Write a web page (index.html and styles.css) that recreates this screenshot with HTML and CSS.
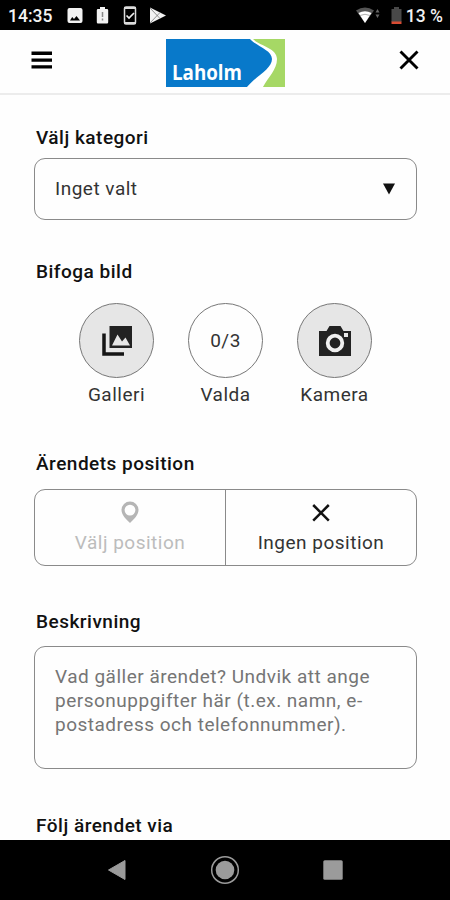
FILE: index.html
```html
<!DOCTYPE html>
<html lang="sv">
<head>
<meta charset="utf-8">
<title>Laholm</title>
<link rel="stylesheet" href="styles.css">
</head>
<body>
<div class="statusbar">
  <span class="time">14:35</span>
  <svg class="status-icons" width="102" height="30" viewBox="0 0 102 30">
    <path fill="#f2f2f2" fill-rule="evenodd" d="M3.500 8h11a2 2 0 0 1 2 2v11a2 2 0 0 1-2 2h-11a2 2 0 0 1-2-2V10a2 2 0 0 1 2-2zM4 20.500h10l-3.500-4.500-2.500 3-1.800-2z"/>
    <path fill="#f2f2f2" d="M34 7h5v2h2q1.200 0 1.200 1.200v12q0 1.300-1.200 1.300h-9q-1.200 0-1.200-1.300v-12Q30.800 9 32 9h2z"/>
    <path stroke="#888" stroke-width="1.500" d="M36.500 12v5m0 1.500v2"/>
    <rect x="58.500" y="7" width="11" height="17" rx="1.500" fill="none" stroke="#ddd" stroke-width="1.500"/>
    <path d="M58 8h12M58 23h12" stroke="#ddd" stroke-width="2"/>
    <path d="M60.500 15.500l2.500 2.500 5-5" fill="none" stroke="#eee" stroke-width="1.700"/>
    <path fill="#f2f2f2" d="M84 7.500L100 15.500 84 23.500z"/>
    <path stroke="#777" stroke-width=".8" fill="none" d="M84 8l10 10.500M84 23l10-10.500"/>
  </svg>
  <div class="status-right">
    <svg width="46" height="30" viewBox="0 0 46 30">
      <path fill="#555" d="M0 10.500Q9 4.500 18 10.500L9 23z"/>
      <path fill="#fff" d="M2.500 13Q9 9.500 15.500 13L9 23z"/>
      <path stroke="#999" stroke-width=".8" fill="none" d="M4 15.500Q9 13 14 15.500"/>
      <path fill="#666" d="M19.500 12.500l2-3.500 2 3.500zM19.500 14.500l2 3.500 2-3.500z"/>
      <path fill="#484848" d="M38 7h5v2h2.500v13h-10V9H38z"/>
      <path fill="#d94b32" d="M35.500 21.500h10V24h-10z"/>
    </svg>
    <span class="percent">13 %</span>
  </div>
</div>
<header class="header">
  <svg width="22" height="20" viewBox="0 0 22 20"><path stroke="#000" stroke-width="3.400" d="M.5 3.300h20.500M.5 10.100h20.500M.5 16.900h20.500"/></svg>
  <svg class="logo" width="119" height="48" viewBox="0 0 119 48">
    <path fill="#a6d865" d="M0 0h119v48H0z"/>
    <path fill="#fff" d="M0 0h87c7 7 24 9 24 20 0 11-9 18-14 28H0z"/>
    <path fill="#0879ca" d="M0 0h84c6 7 22 11 22 20 0 10-16 17-25 28H0z"/>
    <text class="logo-text" x="6" y="40.500" textLength="70" lengthAdjust="spacingAndGlyphs">Laholm</text>
  </svg>
  <svg width="20" height="20" viewBox="0 0 20 20"><path stroke="#000" stroke-width="2.900" d="M1.500 1.500l17 17M18.500 1.500l-17 17"/></svg>
</header>
<main class="form">
  <h2>Välj kategori</h2>
  <div class="select"><span>Inget valt</span>
    <svg width="14" height="12" viewBox="0 0 14 12"><path d="M1 .5h12L7 11.500z" fill="#111"/></svg>
  </div>
  <h2 class="title-images">Bifoga bild</h2>
  <div class="images">
    <div class="image-item">
      <div class="circle filled"><svg width="32" height="32" viewBox="0 0 32 32">
        <path fill="none" stroke="#151515" stroke-width="3.500" d="M3 8.500v20.500H23"/>
        <path fill="#222" fill-rule="evenodd" d="M8.500 1H31v22H8.500zM11 20.500h18l-4.500-8-3.500 4-4.500-7z"/>
      </svg></div><span>Galleri</span>
    </div>
    <div class="image-item">
      <div class="circle">0/3</div><span>Valda</span>
    </div>
    <div class="image-item">
      <div class="circle filled"><svg width="32" height="32" viewBox="0 0 32 32">
        <path fill="#222" d="M0 6h7.500l3-5h11l3 5H32v25H0z"/>
        <circle cx="16" cy="18" r="7.300" fill="none" stroke="#efefef" stroke-width="3.800"/>
        <rect x="25" y="8" width="4" height="4" fill="#e8e8e8"/>
      </svg></div><span>Kamera</span>
    </div>
  </div>
  <h2 class="title-position">Ärendets position</h2>
  <div class="segments">
    <div class="segment disabled">
      <svg width="18" height="23" viewBox="0 0 18 23"><path fill="#b5b5b5" fill-rule="evenodd" d="M9 .5a8.500 8.500 0 0 1 8.500 8.500C17.500 14 13 18 9 22 5 18 .5 14 .5 9A8.500 8.500 0 0 1 9 .5zM9 3.700a5.400 5.400 0 1 0 0 10.800A5.400 5.400 0 1 0 9 3.700z"/></svg>
      <span>Välj position</span>
    </div>
    <div class="segment">
      <svg width="18" height="23" viewBox="0 0 18 23"><path stroke="#111" stroke-width="2.500" d="M1.200 4l15.600 15.600M16.800 4L1.200 19.600"/></svg>
      <span>Ingen position</span>
    </div>
  </div>
  <h2 class="title-description">Beskrivning</h2>
  <div class="description">Vad gäller ärendet? Undvik att ange<br>personuppgifter här (t.ex. namn, e-<br>postadress och telefonnummer).</div>
  <h2 class="title-follow">Följ ärendet via</h2>
</main>
<nav class="navbar">
  <svg width="20" height="22" viewBox="0 0 20 22"><path fill="#9b9b9b" stroke="#9b9b9b" stroke-linejoin="round" d="M1.500 11L18 1.500v19z"/></svg>
  <svg width="30" height="30" viewBox="0 0 30 30"><circle cx="15" cy="15" r="13.300" fill="none" stroke="#9b9b9b" stroke-width="1.500"/><circle cx="15" cy="15" r="9.300" fill="#9b9b9b"/></svg>
  <svg width="20" height="20" viewBox="0 0 20 20"><rect x=".3" y=".3" width="19.400" height="19.400" rx="1.500" fill="#9b9b9b"/></svg>
</nav>
</body>
</html>
```

FILE: styles.css
```css
* { box-sizing: border-box; }
body {
  margin: 0;
  width: 450px;
  height: 900px;
  display: flex;
  flex-direction: column;
  overflow: hidden;
  background: #fefefe;
  color: #333;
  font-family: Roboto, "Liberation Sans", sans-serif;
  font-size: 19px;
  line-height: 24px;
  letter-spacing: .5px;
}
svg { display: block; flex: none; }
.statusbar {
  height: 30px;
  flex: none;
  display: flex;
  align-items: center;
  padding: 0 7px 0 8px;
  background: #000;
  color: #f2f2f2;
  font-size: 17.5px;
  font-weight: 500;
  letter-spacing: 0;
}
.time, .percent { padding-top: 2px; }
.time { width: 58px; }
.status-right { display: flex; align-items: center; gap: 4px; margin-left: auto; }
.header {
  height: 65px;
  flex: none;
  display: flex;
  align-items: center;
  justify-content: space-between;
  padding: 0 31px 3px;
  border-bottom: 2px solid #ececec;
}
.logo { margin: 5px 2px 0 0; }
.logo-text {
  font-family: "Open Sans", sans-serif;
  font-size: 22px;
  font-weight: 700;
  letter-spacing: 0;
  fill: #fff;
}
.form { flex: 1; min-height: 0; padding: 31px 33px 0 34px; }
h2 {
  margin: 0 0 8px 2px;
  font-size: 19px;
  line-height: 24px;
  font-weight: 500;
  color: #111;
}
.select, .segments, .description {
  border: 1px solid #8a8a8a;
  border-radius: 11px;
}
.select {
  height: 62px;
  display: flex;
  align-items: center;
  justify-content: space-between;
  padding: 0 20px;
}
.title-images { margin-top: 40px; margin-bottom: 19px; }
.images { display: flex; justify-content: center; gap: 34px; }
.image-item { width: 75px; display: flex; flex-direction: column; align-items: center; gap: 5px; }
.circle {
  width: 75px;
  height: 75px;
  display: flex;
  align-items: center;
  justify-content: center;
  border: 1px solid #777;
  border-radius: 50%;
}
.filled { background: #e6e6e6; }
.title-position { margin-top: 45px; margin-bottom: 13px; }
.segments { height: 77px; display: flex; }
.segment {
  flex: 1;
  display: flex;
  flex-direction: column;
  align-items: center;
  padding-top: 11px;
  gap: 7px;
}
.segment + .segment { border-left: 1px solid #8a8a8a; }
.disabled { color: #bcbcbc; }
.title-description { margin-top: 44px; margin-bottom: 12px; }
.description { height: 123px; padding: 18px 20px; color: #757575; white-space: nowrap; }
.title-follow { margin-top: 45px; }
.navbar {
  height: 60px;
  flex: none;
  display: flex;
  align-items: center;
  justify-content: space-between;
  padding: 0 107px;
  background: #000;
}
```
